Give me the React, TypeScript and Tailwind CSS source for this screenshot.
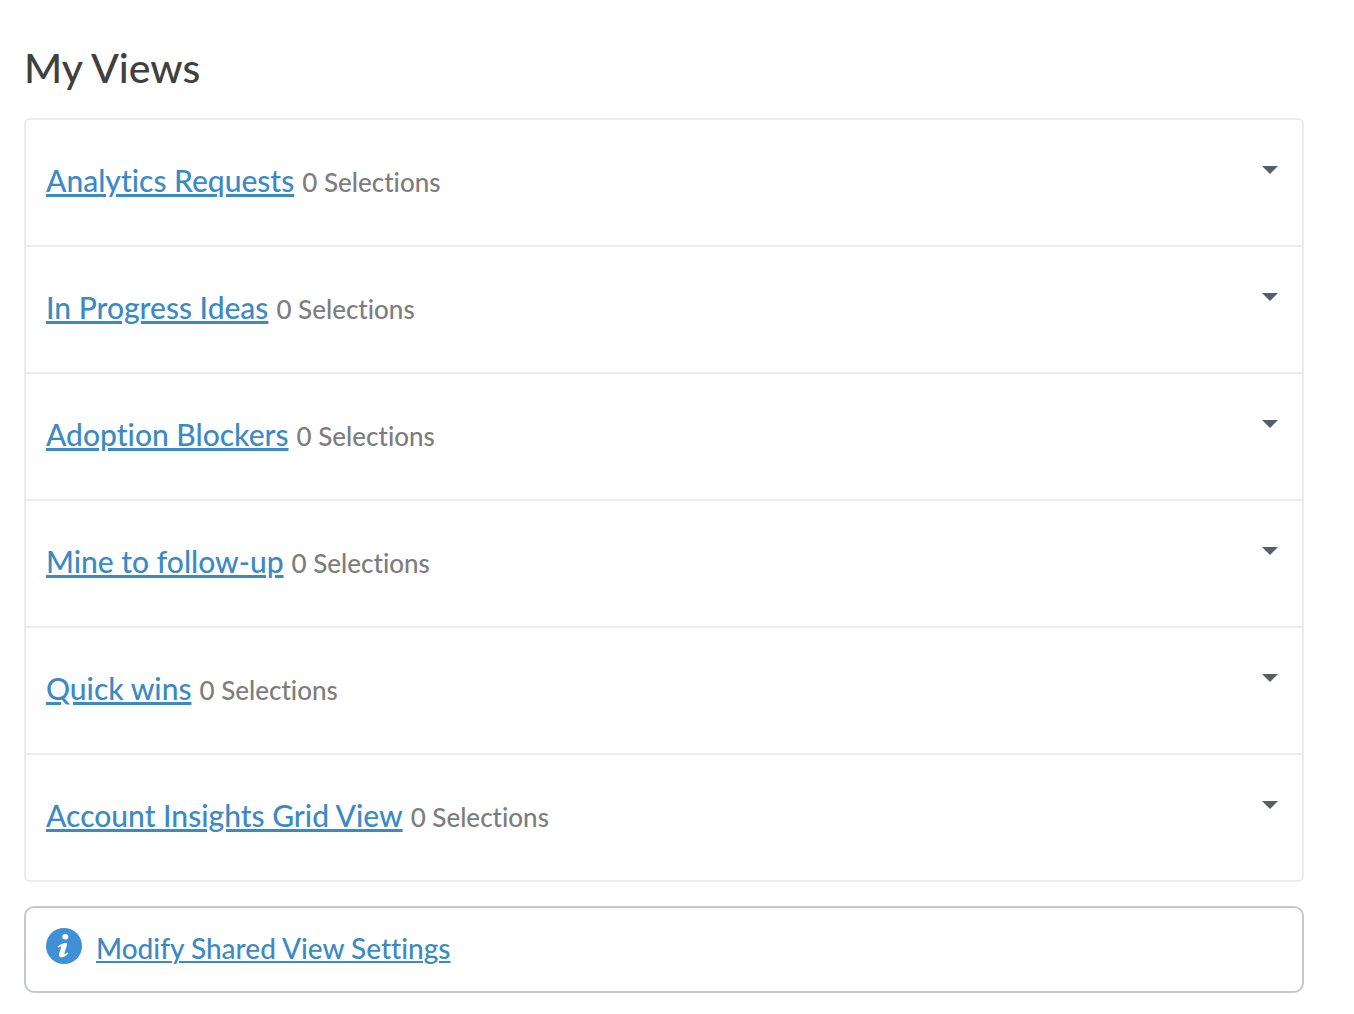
interface SavedView {
    id: string
    title: string
    selections: number
}

const views: SavedView[] = [
    { id: 'analytics-requests', title: 'Analytics Requests', selections: 0 },
    { id: 'in-progress-ideas', title: 'In Progress Ideas', selections: 0 },
    { id: 'adoption-blockers', title: 'Adoption Blockers', selections: 0 },
    { id: 'mine-to-follow-up', title: 'Mine to follow-up', selections: 0 },
    { id: 'quick-wins', title: 'Quick wins', selections: 0 },
    { id: 'account-insights', title: 'Account Insights Grid View', selections: 0 },
]

function InfoIcon() {
    return (
        <svg viewBox="0 0 36 36" className="size-9 shrink-0" aria-hidden="true">
            <circle cx="18" cy="18" r="18" fill="#3f91d5" />
            <ellipse cx="19.300" cy="8.700" rx="3" ry="2.700" fill="#fff" />
            <path
                d="M11.700 18.600C13.500 16.600 16.500 15 21 14.900C21.300 16.400 20.700 18 20.200 19.600L18.400 25C18.100 26.400 19.300 26.100 21.900 24.600L22.300 25.500C20.300 27.800 17.800 29.400 15.500 29.400C13.100 29.400 12.500 27.600 13.100 25.500L15.300 19C15.600 18 14.300 18.500 12.300 19.600Z"
                fill="#fff"
            />
        </svg>
    )
}

function ViewRow({ view }: { view: SavedView }) {
    return (
        <li className="flex items-start justify-between border-b-2 border-[#ebebf1] pb-[47px] pl-5 pr-6 last:border-b-0">
            <div className="flex flex-wrap items-baseline gap-x-2 pt-[42px]">
                <a
                    href={`#${view.id}`}
                    className="text-[30px] leading-9 text-[#3b8ac4] underline decoration-3 underline-offset-2"
                >
                    {view.title}
                </a>
                <span className="text-[26px] leading-8 text-[#7d7d7d]">{view.selections} Selections</span>
            </div>
            <button type="button" aria-label={`Options for ${view.title}`} className="mt-[46px]">
                <svg viewBox="0 0 16 8" className="h-2 w-4" aria-hidden="true">
                    <path d="M0 0h16L8 8z" fill="#5b5d66" />
                </svg>
            </button>
        </li>
    )
}

export default function App() {
    return (
        <main className="bg-white pb-5 pl-6 pr-[50px] pt-[43px] font-['Lato','Liberation_Sans',sans-serif] font-medium [font-variant-ligatures:none]">
            <h1 className="mb-[25px] text-[41px] leading-[50px] text-[#404040]">My Views</h1>
            <ul className="rounded-md border-2 border-[#ebebf1]">
                {views.map(view => (
                    <ViewRow key={view.id} view={view} />
                ))}
            </ul>
            <div className="mt-6 flex items-start gap-3.5 rounded-[10px] border-2 border-[#c5c9cd] px-5 pb-[23px] pt-5">
                <InfoIcon />
                <a
                    href="#shared-view-settings"
                    className="text-[28px] leading-10 text-[#3b8ac4] underline decoration-2 underline-offset-2"
                >
                    Modify Shared View Settings
                </a>
            </div>
        </main>
    )
}
